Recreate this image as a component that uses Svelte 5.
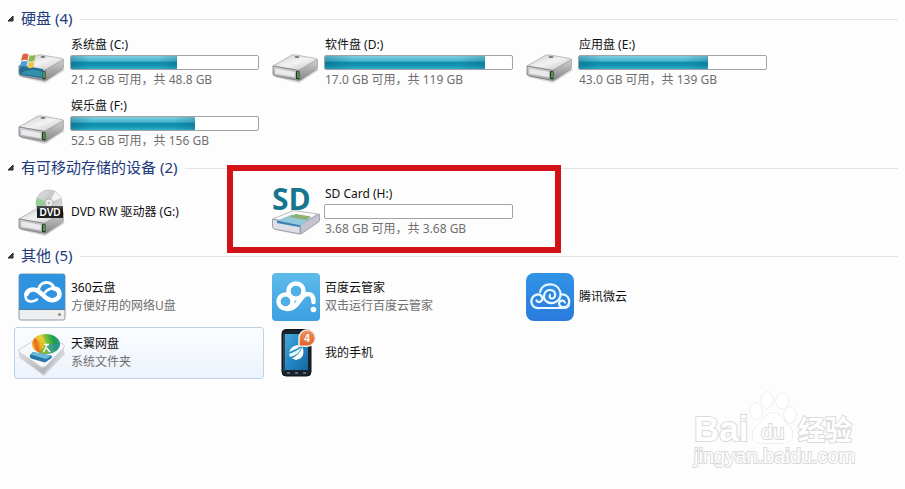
<script lang="ts">
  type Item = {
    name: string;
    icon: string;
    free?: string;
    total?: string;
    note?: string;
    selected?: boolean;
    marked?: boolean;
  };

  type Group = {
    title: string;
    compact?: boolean;
    open: boolean;
    items: Item[];
  };

  let groups: Group[] = $state([
    {
      title: '硬盘',
      open: true,
      items: [
        { name: '系统盘 (C:)', icon: 'system', free: '21.2', total: '48.8' },
        { name: '软件盘 (D:)', icon: 'drive', free: '17.0', total: '119' },
        { name: '应用盘 (E:)', icon: 'drive', free: '43.0', total: '139' },
        { name: '娱乐盘 (F:)', icon: 'drive', free: '52.5', total: '156' }
      ]
    },
    {
      title: '有可移动存储的设备',
      open: true,
      items: [
        { name: 'DVD RW 驱动器 (G:)', icon: 'dvd' },
        { name: 'SD Card (H:)', icon: 'sd', free: '3.68', total: '3.68', marked: true }
      ]
    },
    {
      title: '其他',
      compact: true,
      open: true,
      items: [
        { name: '360云盘', icon: 'cloud360', note: '方便好用的网络U盘' },
        { name: '百度云管家', icon: 'baidu', note: '双击运行百度云管家' },
        { name: '腾讯微云', icon: 'weiyun' },
        { name: '天翼网盘', icon: 'tianyi', note: '系统文件夹', selected: true },
        { name: '我的手机', icon: 'phone' }
      ]
    }
  ]);

  function used(item: Item) {
    const total = Number(item.total);
    return ((total - Number(item.free)) / total) * 100;
  }
</script>

{#snippet driveBody()}
  <path d="M3 40 L27 46 L47 33 L44 31 Z" fill="#000" opacity=".16" />
  <path d="M1 29 L19 18.5 Q21 17.5 24 18 L44 21.5 Q45.5 22 45 23 L28 33.5 Z" fill="url(#metalTop)" stroke="#a4a4a4" stroke-width=".7" />
  <path d="M27 33 L45.5 22.5 V30.5 Q45 32 43.5 33 L28 43.5 Z" fill="url(#metalSide)" stroke="#888" stroke-width=".5" />
  <path d="M1 29 L27 33.5 V43.5 L3 39 Q1 38.5 1 37 Z" fill="url(#metalFront)" stroke="#777" stroke-width=".8" />
  <path d="M3 31 L23 34.5 V40.5 L3 37 Z" fill="#e9e9ee" stroke="#b4b4b9" stroke-width=".5" />
  <path d="M24 34 L27.5 34.5 V42.5 L24 42 Z" fill="#26352a" />
  <path d="M26 35 V41" stroke="#6fd34e" stroke-width="1.2" />
{/snippet}

{#snippet icon(kind: string)}
  <svg class="icon" viewBox="0 0 48 48" aria-hidden="true">
    {#if kind === 'drive' || kind === 'system'}
      <g transform="translate(0 -2)">
        {@render driveBody()}
        <ellipse cx="25" cy="20" rx="2.5" ry="1.1" fill="#777" />
        {#if kind === 'system'}
          <path d="M2 28 L25 32 V41.5 L3 38 Q1 37 1 34 Z" fill="#246f91" />
          <path d="M3 36 Q13 30 24 35 V40 L5 37 Z" fill="#3aa0b5" opacity=".7" />
          <path d="M4.5 17.5 Q7.5 15.5 10.5 17.5 L9.5 23.5 Q6.5 22 3 24 Z" fill="#dd6440" />
          <path d="M11.5 18 Q14.5 19.5 17.5 17.5 L16.5 23.5 Q13.5 25.5 10.5 24 Z" fill="#8db84a" />
          <path d="M3 25 Q6 23.2 9.5 24.7 L8.5 30 Q5.5 28.5 2 30.5 Z" fill="#4d9dd6" />
          <path d="M10.5 25 Q13.5 26.5 16.5 24.5 L15.5 30 Q12.5 32 9.5 30.5 Z" fill="#efc34c" />
        {/if}
      </g>
    {:else if kind === 'dvd'}
      <circle cx="31" cy="15" r="13" fill="url(#disc)" stroke="#b9bcbd" stroke-width=".8" />
      <path d="M31 15 L19 10 A13 13 0 0 0 19 20 Z" fill="#7fd083" opacity=".75" />
      <path d="M31 15 L37 3.5 A13 13 0 0 1 43 10 Z" fill="#fff" opacity=".8" />
      <circle cx="31" cy="15" r="4" fill="#eef0f0" stroke="#aaa" stroke-width=".8" />
      <circle cx="31" cy="15" r="1.5" fill="#bbb" />
      <g transform="translate(0 2)">{@render driveBody()}</g>
      <rect x="19" y="18" width="26" height="12" fill="url(#label)" />
      <text x="32" y="28" text-anchor="middle" class="dvd">DVD</text>
    {:else if kind === 'sd'}
      <text x="0" y="22" class="sd">SD</text>
      <path d="M2 42 L28 47 L48 34 L45 33 Z" fill="#000" opacity=".12" />
      <path d="M1 31 L20 23 Q22 22.5 25 23 L46 26 L28 37 Z" fill="#fafafa" stroke="#aaa" stroke-width=".8" />
      <path d="M28 37 L47.5 26 V33 L29 46 Z" fill="#c4c4ce" stroke="#8d8d99" stroke-width=".7" />
      <path d="M.5 31 L28 37 V46 L2 41 Q.5 40 .5 38 Z" fill="#dedee6" stroke="#8d8d99" stroke-width=".8" />
      <path d="M5 32.5 L20 26.5 L39 29.5 L28 38 Z" fill="#91c9dd" />
      <path d="M17 29 L24 26 L39 28.5 L34 32 Z" fill="#8fae72" />
      <path d="M5 32.5 L29 37.5 L27 39 L5 35 Z" fill="#3c83b3" />
    {:else if kind === 'cloud360'}
      <rect x="1" y="1" width="46" height="46" rx="2" fill="#eceef0" stroke="#919aa2" />
      <path d="M1 3 Q1 1 3 1 H45 Q47 1 47 3 V36 H1 Z" fill="#2f93df" />
      <path d="M1 36.5 H47" stroke="#527da1" />
      <circle cx="41.5" cy="41.5" r="1.6" fill="#a58d72" />
      <g fill="none" stroke="#fff" stroke-linecap="round">
        <path d="M19 26.5 C14 30 7.5 29 7.5 23 C7.5 20 9 18 11 17" stroke-width="2.6" />
        <path d="M8.5 21 C10 16 16 15.5 20 18 C25 21 28 27 33.5 27.3 C39 27.5 42 24 41.3 20 C40.8 17 38.5 15.5 36 15.5" stroke-width="4.6" />
        <path d="M20.5 16.5 C22 7.5 34 7 36 15.5" stroke-width="3" />
        <path d="M36 15.5 C32 15 29 17 27 19.5" stroke-width="2.6" />
      </g>
    {:else if kind === 'baidu'}
      <rect width="48" height="48" rx="4" fill="url(#blueBaidu)" />
      <g fill="none" stroke="#fff">
        <circle cx="24" cy="18" r="7.5" stroke-width="4.5" />
        <circle cx="13.5" cy="28.5" r="7" stroke-width="4.5" />
        <path d="M15 36 C27 36 28 21 36 21 C41 21 41.5 26 41.5 29" stroke-width="4.5" stroke-linecap="round" />
      </g>
      <circle cx="24" cy="18" r="5.2" fill="#51b1e7" />
      <circle cx="13.5" cy="28.5" r="4.7" fill="#4eafe6" />
      <circle cx="41.5" cy="36.5" r="2.8" fill="#fff" />
    {:else if kind === 'weiyun'}
      <rect width="48" height="48" rx="8" fill="url(#blueWeiyun)" />
      <g fill="none" stroke="#e9f9ff" stroke-width="2.2" stroke-linecap="round">
        <path d="M14 35 C7 36 4 30 6 25.5 C8 21 14 20 16 24 C18 28 12 31 10.5 27.5" />
        <path d="M14 19 C16 9 31 9 34 18 C37 27 27 33 20.5 28.5 C16 25 18 17 24 17 C30 17 31 25 26 25.5 C24 25.5 23 24 24 22" />
        <path d="M35 21.5 C41 20.5 44 26 43 30 C42 35 34 35.5 33 31 C33 27 38 26.5 39 29.5" />
        <path d="M13 35 H38 C41 35 43 33 43 30" />
      </g>
    {:else if kind === 'tianyi'}
      <path d="M2 28 L26 47 L47 25 L45 20 Z" fill="#555" opacity=".22" />
      <path d="M1 22 V27 Q1 29 3 30 L23 44 Q25 45.5 27 43.5 L46 22 V17 Z" fill="url(#traySide)" />
      <path d="M1 23 Q0 21.5 2 20 L20 9 Q22 8 25 8.5 L45 15 Q47 16 46 18.5 L28 37 Q26 39 23 38 Z" fill="#f7f8f9" stroke="#c4c8cc" stroke-width=".8" />
      <ellipse cx="28" cy="15" rx="14" ry="10" fill="url(#rainbow)" />
      <path d="M28 15 L42 15 A14 10 0 0 1 31 24.8 Z" fill="#2f8fb5" opacity=".55" />
      <path d="M28 15 L16.5 9.3 A14 10 0 0 1 24 5.4 Z" fill="#e9d337" opacity=".7" />
      <path d="M28 15 L31 24.8 A14 10 0 0 1 21 23.7 Z" fill="#58b53f" opacity=".7" />
      <path d="M12 26 L15 23 L33 26.5 Q35 27.5 33 29.5 L27 33.5 L13 29.5 Q11 28 12 26 Z" fill="#2479a8" />
      <path d="M13 25.5 L16 23 L33 27 L28 30 Z" fill="#6dbbe0" />
      <path d="M26 15.5 H31 M29 16 L25.5 23 M28.500 19 L32 23" fill="none" stroke="#fff" stroke-width="1.4" />
    {:else if kind === 'phone'}
      <rect x="10" y=".5" width="29" height="46.5" rx="4" fill="#17232d" stroke="#0c1218" />
      <path d="M12 5 V42" stroke="#637888" stroke-width=".7" />
      <rect x="13" y="5" width="23" height="36" fill="url(#screen)" />
      <path d="M17 23 Q20 15 29 16 Q28 19 17 23 Z" fill="#fff" />
      <path d="M17 25 Q25 22 29.5 18 Q27 26 18 28 Z" fill="#e9faff" />
      <path d="M20 29.5 Q27 26 30.5 18 Q34 29 24 31 Z" fill="#fff" />
      <path d="M15 44 H18 M23 44 H26 M31 44 H34" stroke="#9cb2be" />
      <path d="M27 17 V9 A8.2 8.2 0 1 1 35.2 17.2 Z" fill="url(#badge)" stroke="#f7eee9" stroke-width="1.5" />
      <text x="35" y="13" text-anchor="middle" class="count">4</text>
    {/if}
  </svg>
{/snippet}

<svg class="defs" aria-hidden="true">
  <defs>
    <linearGradient id="metalTop" x1="0" y1="0" x2="1" y2="1">
      <stop stop-color="#c9c9c9" /><stop offset=".5" stop-color="#f3f3f3" /><stop offset="1" stop-color="#bdbdbd" />
    </linearGradient>
    <linearGradient id="metalSide" x1="0" y1="0" x2="0" y2="1">
      <stop stop-color="#d0d0d0" /><stop offset="1" stop-color="#858585" />
    </linearGradient>
    <linearGradient id="metalFront" x1="0" y1="0" x2="0" y2="1">
      <stop stop-color="#dadada" /><stop offset="1" stop-color="#9b9b9b" />
    </linearGradient>
    <linearGradient id="traySide" x1="0" y1="0" x2="1" y2="0">
      <stop stop-color="#dadcdf" /><stop offset=".55" stop-color="#b4b6ba" /><stop offset="1" stop-color="#d5d7da" />
    </linearGradient>
    <linearGradient id="rainbow" x1="0" y1=".6" x2="1" y2=".4">
      <stop stop-color="#f2c21c" /><stop offset=".16" stop-color="#e8641f" /><stop offset=".34" stop-color="#eec522" />
      <stop offset=".55" stop-color="#7dc13a" /><stop offset=".8" stop-color="#1f9e4b" /><stop offset="1" stop-color="#2c9a86" />
    </linearGradient>
    <linearGradient id="disc" x1="0" y1="0" x2="1" y2="1">
      <stop stop-color="#e4e6e5" /><stop offset=".5" stop-color="#bfc2c2" /><stop offset="1" stop-color="#eee" />
    </linearGradient>
    <linearGradient id="label" x1="0" y1="0" x2="0" y2="1">
      <stop stop-color="#555" /><stop offset=".4" stop-color="#111" /><stop offset="1" stop-color="#222" />
    </linearGradient>
    <linearGradient id="blueBaidu" x1="0" y1="0" x2="0" y2="1">
      <stop stop-color="#5ebbea" /><stop offset="1" stop-color="#3b9fe1" />
    </linearGradient>
    <linearGradient id="blueWeiyun" x1="0" y1="0" x2="0" y2="1">
      <stop stop-color="#3093e6" /><stop offset="1" stop-color="#2a7bdc" />
    </linearGradient>
    <linearGradient id="screen" x1="0" y1="0" x2="1" y2="1">
      <stop stop-color="#48a7d8" /><stop offset=".5" stop-color="#2188c6" /><stop offset="1" stop-color="#1a679f" />
    </linearGradient>
    <linearGradient id="badge" x1="0" y1="0" x2="0" y2="1">
      <stop stop-color="#f09464" /><stop offset="1" stop-color="#de6327" />
    </linearGradient>
  </defs>
</svg>

<main class="page">
  {#each groups as group}
    <section class="group">
      <h2>
        <button class="group__toggle" aria-expanded={group.open} onclick={() => (group.open = !group.open)}>
          <svg class="arrow" class:arrow--closed={!group.open} viewBox="0 0 7 7" aria-hidden="true">
            <path d="M6 1 V6 H1 Z" fill="#444" stroke="#222" />
          </svg>
          {group.title} ({group.items.length})
        </button>
      </h2>

      {#if group.open}
        <div class="tiles" class:tiles--compact={group.compact}>
          {#each group.items as item}
            <button class="tile" class:tile--selected={item.selected} class:tile--marked={item.marked}>
              {@render icon(item.icon)}
              <span class="tile__text">
                <span class="tile__name">{item.name}</span>
                {#if item.total}
                  <span class="bar"><span class="bar__fill" style="width: {used(item)}%"></span></span>
                  <span class="tile__note">{item.free} GB 可用，共 {item.total} GB</span>
                {:else if item.note}
                  <span class="tile__note">{item.note}</span>
                {/if}
              </span>
            </button>
          {/each}
        </div>
      {/if}
    </section>
  {/each}

  <svg class="watermark" viewBox="0 0 170 82" role="img" aria-label="Baidu 经验">
    <text x="4" y="51" class="wm-bai">Bai</text>
    <g>
      <ellipse cx="66" cy="21" rx="6" ry="8" />
      <ellipse cx="77" cy="10" rx="6" ry="8" />
      <ellipse cx="92" cy="11" rx="6" ry="8" />
      <ellipse cx="100" cy="25" rx="6" ry="8" />
      <path d="M83 23 C91 23 94 31 98 35 C107 44 102 53 92 53 H73 C62 53 59 43 67 36 C73 30 75 23 83 23 Z" />
    </g>
    <text x="71" y="49" class="wm-du">du</text>
    <text x="108" y="50" class="wm-cn">经验</text>
    <text x="4" y="73" class="wm-url">jingyan.baidu.com</text>
  </svg>
</main>

<style>
  :global(body) {
    margin: 0;
    background: #fdfdfd;
  }

  .page {
    position: relative;
    box-sizing: border-box;
    min-height: 100vh;
    padding: 3px 7px 16px;
    font-family: 'Noto Sans', 'Noto Sans CJK SC', sans-serif;
    font-size: 12px;
  }

  .defs {
    position: absolute;
    width: 0;
    height: 0;
  }

  .group {
    padding-top: 3px;
  }

  h2 {
    display: flex;
    align-items: center;
    gap: 8px;
    height: 24px;
    margin: 0 0 4px;
    font-weight: 400;
  }

  h2::after {
    content: '';
    flex: 1;
    height: 1px;
    margin-top: 2px;
    background: #e0e3e8;
  }

  button {
    border: 0;
    padding: 0;
    background: none;
    color: inherit;
    font: inherit;
    text-align: left;
  }

  .group__toggle {
    display: flex;
    align-items: center;
    gap: 7px;
    color: #223a7c;
    font-size: 15px;
    line-height: 24px;
    white-space: nowrap;
  }

  .arrow {
    width: 7px;
    height: 7px;
  }

  .arrow--closed {
    transform: rotate(-45deg);
  }

  .tiles {
    display: grid;
    grid-template-columns: repeat(auto-fill, 250px);
    grid-auto-rows: minmax(57px, auto);
    gap: 4px;
    padding-left: 7px;
  }

  .tiles--compact {
    grid-auto-rows: minmax(52px, auto);
  }

  .tile {
    position: relative;
    display: flex;
    align-items: center;
    gap: 4px;
    box-sizing: border-box;
    border: 1px solid transparent;
    border-radius: 3px;
    padding: 0 4px 0 3px;
  }

  .tile--selected {
    border-color: #bcd3e6;
    background: linear-gradient(#fbfcfe, #edf3fc);
  }

  .tile--marked::after {
    content: '';
    position: absolute;
    inset: -19px -44px -14px -42px;
    border: 6px solid #d31215;
    pointer-events: none;
  }

  .icon {
    flex: none;
    width: 48px;
    height: 48px;
    overflow: visible;
  }

  .tile__text {
    flex: 1;
    display: grid;
    line-height: 18px;
    white-space: nowrap;
  }

  .tile__name,
  .tile__note {
    padding-left: 1px;
  }

  .tile__name {
    color: #111;
  }

  .tile__note {
    color: #6f6f6f;
  }

  .bar {
    box-sizing: border-box;
    height: 15px;
    margin: 1px 0;
    border: 1px solid #a3a3a3;
    border-radius: 2px;
    background: #fff;
    overflow: hidden;
  }

  .bar__fill {
    display: block;
    height: 100%;
    background:
      linear-gradient(90deg, rgb(0 80 110 / 30%), transparent 18%, transparent 82%, rgb(0 80 110 / 25%)),
      linear-gradient(#7fd0e2, #45b4cd 40%, #0d8dab 48%, #1596b3 75%, #2fb2cb);
  }

  .dvd {
    fill: #fff;
    font: 700 10px 'Liberation Sans', sans-serif;
  }

  .sd {
    fill: #17758f;
    font: 700 30px 'Open Sans', sans-serif;
  }

  .count {
    fill: #fff;
    font: 700 10px 'Liberation Sans', sans-serif;
  }

  .watermark {
    position: absolute;
    right: 45px;
    bottom: 17px;
    width: 170px;
    height: 82px;
    fill: #fff;
    stroke: #dadada;
    stroke-width: 1px;
    paint-order: stroke;
  }

  .wm-bai {
    font: 700 35px 'Liberation Sans', sans-serif;
    stroke-width: 2px;
  }

  .wm-du {
    font: 400 21px 'Liberation Sans', sans-serif;
    stroke-width: 2px;
  }

  .wm-cn {
    font: 700 27px 'Noto Sans CJK SC', sans-serif;
    stroke-width: 2px;
  }

  .wm-url {
    font: 400 20px 'Liberation Sans', sans-serif;
    stroke-width: 2px;
  }
</style>
